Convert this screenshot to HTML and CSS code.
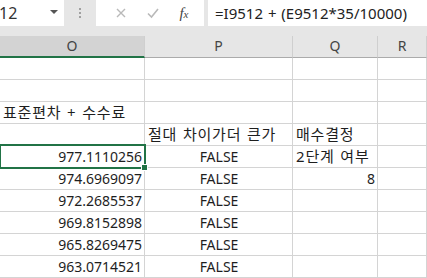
FILE: index.html
```html
<!DOCTYPE html>
<html lang="ko">
<head>
  <meta charset="UTF-8">
  <title>Sheet</title>
  <link rel="stylesheet" href="styles.css">
</head>
<body>

  <!-- Formula bar -->
  <div class="formula-bar">
    <div class="name-box">
      <span class="name-text">12</span>
      <span class="drop"></span>
    </div>
    <div class="grip"><i></i><i></i><i></i></div>
    <div class="fn-box">
      <svg class="ic" width="12" height="12" viewBox="0 0 12 12"><path d="M2 2 L10 10 M10 2 L2 10" stroke="#b9b9b9" stroke-width="1.4" fill="none"/></svg>
      <svg class="ic" width="14" height="12" viewBox="0 0 14 12"><path d="M2 6.5 L5.5 10 L12 2" stroke="#b9b9b9" stroke-width="1.6" fill="none"/></svg>
      <span class="fx">f<small>x</small></span>
    </div>
    <div class="formula">=I9512 + (E9512*35/10000)</div>
  </div>

  <!-- Sheet -->
  <div class="sheet">
    <div class="hd sel">O</div>
    <div class="hd">P</div>
    <div class="hd">Q</div>
    <div class="hd">R</div>

    <div class="c"></div><div class="c"></div><div class="c"></div><div class="c"></div>
    <div class="c"></div><div class="c"></div><div class="c"></div><div class="c"></div>

    <div class="c ko">표준편차 + 수수료</div><div class="c"></div><div class="c"></div><div class="c"></div>

    <div class="c"></div><div class="c ko">절대 차이가더 큰가</div><div class="c ko">매수결정</div><div class="c"></div>

    <div class="c num active">977.1110256</div><div class="c mid">FALSE</div><div class="c ko">2단계 여부</div><div class="c"></div>
    <div class="c num">974.6969097</div><div class="c mid">FALSE</div><div class="c num">8</div><div class="c"></div>
    <div class="c num">972.2685537</div><div class="c mid">FALSE</div><div class="c"></div><div class="c"></div>
    <div class="c num">969.8152898</div><div class="c mid">FALSE</div><div class="c"></div><div class="c"></div>
    <div class="c num">965.8269475</div><div class="c mid">FALSE</div><div class="c"></div><div class="c"></div>
    <div class="c num">963.0714521</div><div class="c mid">FALSE</div><div class="c"></div><div class="c"></div>
  </div>

</body>
</html>
```

FILE: styles.css
```css
body {
  margin: 0;
  width: 427px;
  height: 278px;
  overflow: hidden;
  background-color: #e6e6e6;
  font-family: 'Noto Sans', 'Noto Sans CJK KR', sans-serif;
  color: #1e1e1e;
}

/* formula bar */
.formula-bar {
  display: flex;
  height: 26px;
  margin-bottom: 10px;
}

.name-box {
  width: 64px;
  background-color: #fff;
  display: flex;
  align-items: center;
  justify-content: space-between;
  padding-right: 6px;
  box-sizing: border-box;
}

.name-text {
  font-size: 16px;
  margin-left: -1px;
  color: #333;
}

.drop {
  width: 0;
  height: 0;
  border-left: 4px solid transparent;
  border-right: 4px solid transparent;
  border-top: 4px solid #555;
  margin-top: -2px;
}

.grip {
  width: 32px;
  display: flex;
  flex-direction: column;
  align-items: center;
  justify-content: center;
  gap: 2px;
}

.grip i {
  width: 2px;
  height: 2px;
  background-color: #a0a0a0;
}

.fn-box {
  width: 108px;
  background-color: #fff;
  display: flex;
  align-items: center;
  justify-content: space-around;
  padding: 0 6px 0 10px;
  box-sizing: border-box;
}

.fx {
  font-family: 'Liberation Serif', serif;
  font-style: italic;
  font-size: 15px;
  color: #444;
}

.fx small {
  font-size: 11px;
}

.formula {
  flex: 1;
  margin-left: 4px;
  background-color: #fff;
  font-size: 15px;
  line-height: 26px;
  padding-left: 7px;
  white-space: nowrap;
  word-spacing: 1px;
  color: #222;
}

/* grid */
.sheet {
  display: grid;
  grid-template-columns: 145px 148px 85px 1fr;
  grid-auto-rows: 22px;
  background-color: #fff;
  border-left: 1px solid #c8c8c8;
  margin-left: -1px;
}

.hd {
  background-color: #e6e6e6;
  border-right: 1px solid #cfcfcf;
  border-bottom: 1px solid #ababab;
  text-align: center;
  font-size: 14px;
  line-height: 20px;
  color: #444;
}

.hd.sel {
  background-color: #d3d3d3;
  border-bottom: 2px solid #217346;
  line-height: 19px;
}

.c {
  border-right: 1px solid #d4d4d4;
  border-bottom: 1px solid #d4d4d4;
  font-size: 14px;
  line-height: 21px;
  padding: 0 2px 0 3px;
  white-space: nowrap;
  position: relative;
}

.c.ko {
  font-size: 15px;
  letter-spacing: 0.8px;
  word-spacing: 1px;
  line-height: 20px;
}

.c.num {
  text-align: right;
}

.c.mid {
  text-align: center;
}

.c.active::after {
  content: '';
  position: absolute;
  left: -1px;
  top: -2px;
  right: -2px;
  bottom: -2px;
  border: 2px solid #217346;
}

.c.active::before {
  content: '';
  position: absolute;
  right: -4px;
  bottom: -4px;
  width: 5px;
  height: 5px;
  background-color: #217346;
  border: 1px solid #fff;
  z-index: 1;
}
```
